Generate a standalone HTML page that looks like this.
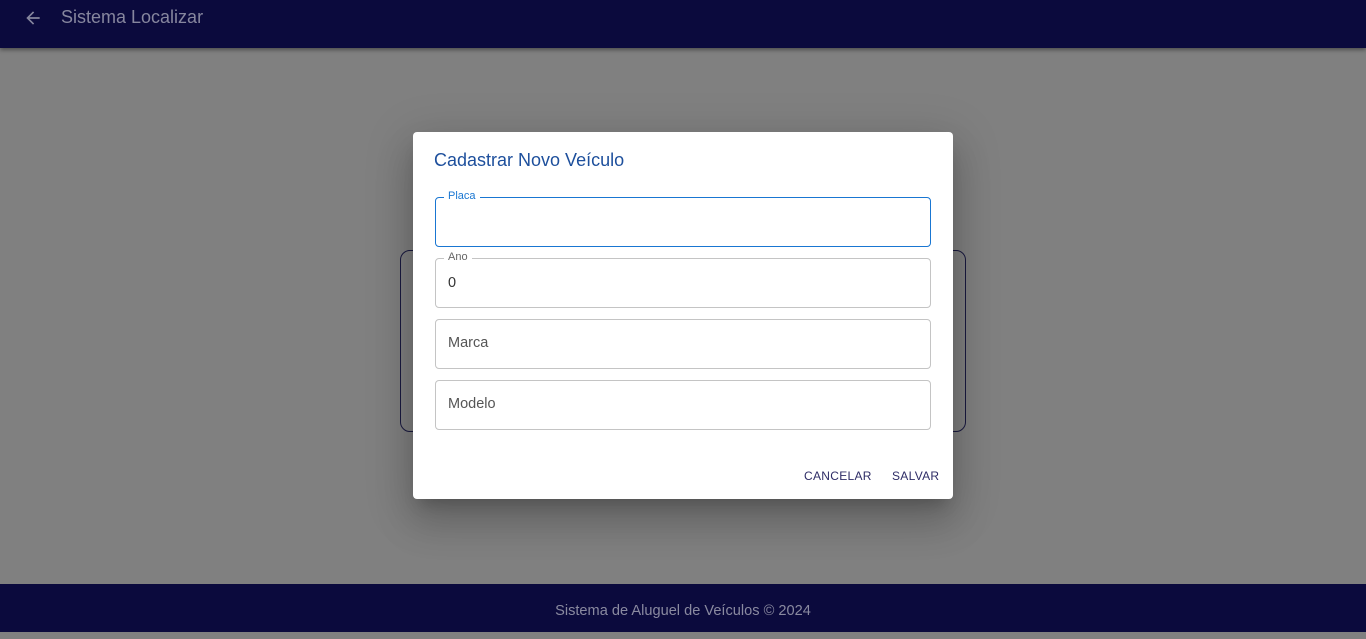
<!DOCTYPE html>
<html><head><meta charset="utf-8"><style>
*{box-sizing:border-box;margin:0;padding:0}
body{width:1366px;height:632px;overflow:hidden;background:#808080;font-family:"Liberation Sans",sans-serif;position:relative}
.hdr{position:absolute;left:0;top:0;width:1366px;height:48px;background:#0b0a3d;box-shadow:0 2px 4px rgba(0,0,0,.4)}
.hdr .t{position:absolute;left:61px;top:7px;font-size:18px;color:#86869e}
.hdr svg{position:absolute;left:23px;top:8px}
.ftr{position:absolute;left:0;top:584px;width:1366px;height:48px;background:#0b0a3d;color:#8a8aa0;font-size:14.6px;text-align:center;line-height:55px}
.card{position:absolute;left:400px;top:250px;width:566px;height:182px;border:1px solid #1a1a40;border-radius:10px}
.dlg{position:absolute;left:413px;top:132px;width:540px;height:367px;background:#fff;border-radius:4px;box-shadow:0 11px 15px -7px rgba(0,0,0,.2),0 24px 38px 3px rgba(0,0,0,.14),0 9px 46px 8px rgba(0,0,0,.12)}
.dlg h2{position:absolute;left:21px;top:18px;font-weight:normal;font-size:18px;color:#1d4f9c}
.f{position:absolute;left:22px;width:496px;height:50px;border:1px solid #c4c4c4;border-radius:4px}
.f.foc{border-color:#1976d2;}
.f .lb{position:absolute;left:8px;top:-8px;background:#fff;padding:0 4px;font-size:11px;color:#666}
.f.foc .lb{color:#1976d2}
.f .v{position:absolute;left:12px;top:16px;font-size:14.5px;color:#333}
.f .ph{position:absolute;left:12px;top:15px;font-size:14.5px;color:#555}
.btn{position:absolute;top:337px;font-size:12px;color:#2e2c66;letter-spacing:.3px}
</style></head><body>
<div class="hdr"><svg width="20" height="20" viewBox="0 0 24 24"><path d="M20 11H7.83l5.59-5.59L12 4l-8 8 8 8 1.41-1.41L7.83 13H20v-2z" fill="#86869e"/></svg><div class="t">Sistema Localizar</div></div>
<div class="card"></div>
<div class="dlg">
<h2>Cadastrar Novo Veículo</h2>
<div class="f foc" style="top:65px"><span class="lb">Placa</span></div>
<div class="f" style="top:126px"><span class="lb">Ano</span><span class="v">0</span></div>
<div class="f" style="top:187px"><span class="ph">Marca</span></div>
<div class="f" style="top:248px"><span class="ph">Modelo</span></div>
<div class="btn" style="left:391px">CANCELAR</div>
<div class="btn" style="left:479px">SALVAR</div>
</div>
<div class="ftr">Sistema de Aluguel de Veículos © 2024</div>
</body></html>
